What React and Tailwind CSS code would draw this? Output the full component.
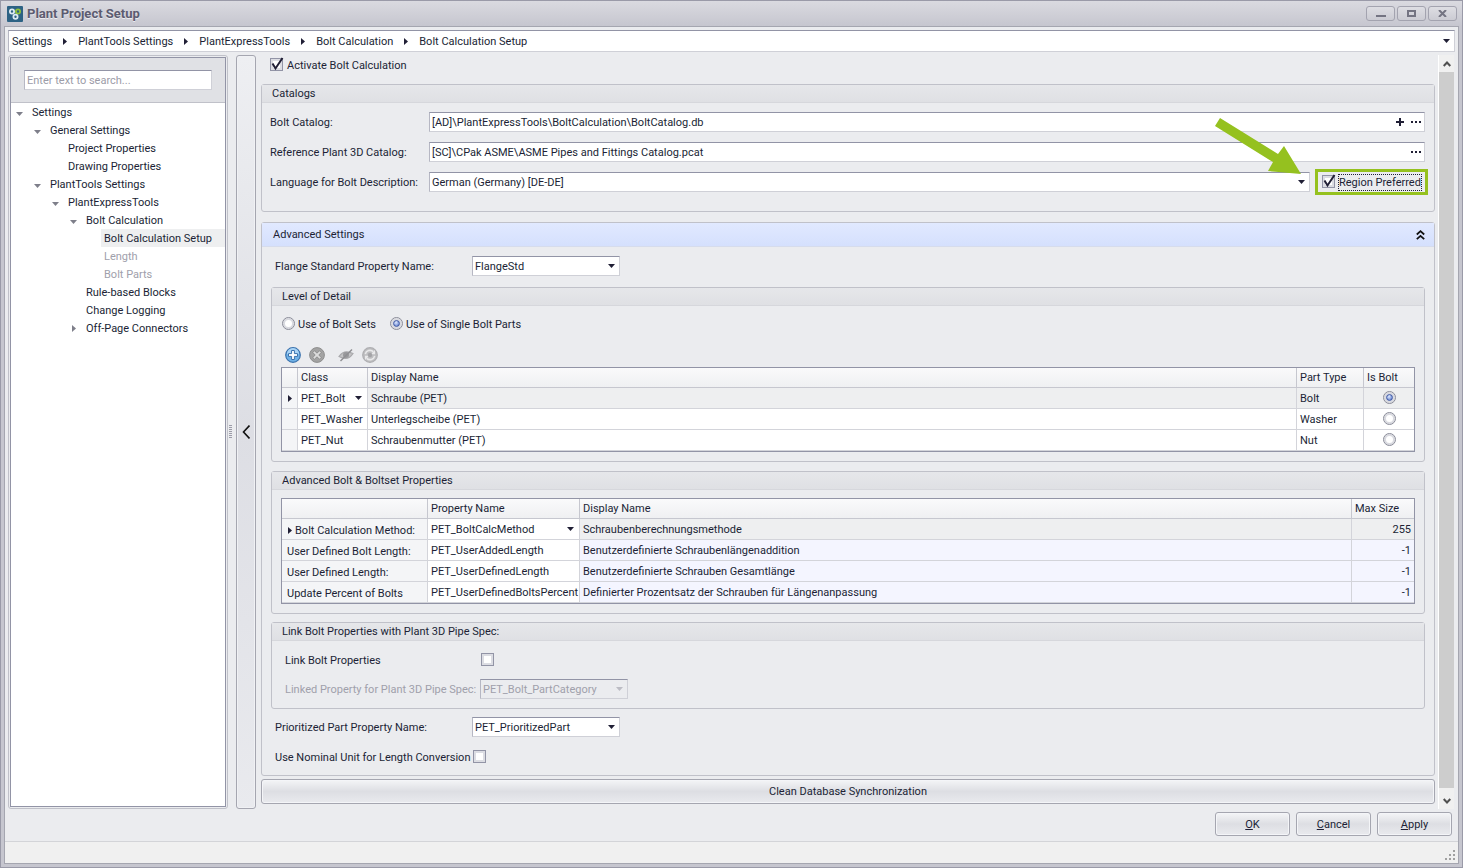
import React, { useState } from 'react';

const crumbs = ['Settings', 'PlantTools Settings', 'PlantExpressTools', 'Bolt Calculation', 'Bolt Calculation Setup'];

const treeItems = [
  { label: 'Settings', indent: 'pl-1', state: 'open' },
  { label: 'General Settings', indent: 'pl-[22px]', state: 'open' },
  { label: 'Project Properties', indent: 'pl-10' },
  { label: 'Drawing Properties', indent: 'pl-10' },
  { label: 'PlantTools Settings', indent: 'pl-[22px]', state: 'open' },
  { label: 'PlantExpressTools', indent: 'pl-10', state: 'open' },
  { label: 'Bolt Calculation', indent: 'pl-[58px]', state: 'open' },
  { label: 'Bolt Calculation Setup', indent: 'pl-[76px]', active: true },
  { label: 'Length', indent: 'pl-[76px]', disabled: true },
  { label: 'Bolt Parts', indent: 'pl-[76px]', disabled: true },
  { label: 'Rule-based Blocks', indent: 'pl-[58px]' },
  { label: 'Change Logging', indent: 'pl-[58px]' },
  { label: 'Off-Page Connectors', indent: 'pl-[58px]', state: 'closed' },
];

const parts = [
  { id: 'PET_Bolt', display: 'Schraube (PET)', type: 'Bolt' },
  { id: 'PET_Washer', display: 'Unterlegscheibe (PET)', type: 'Washer' },
  { id: 'PET_Nut', display: 'Schraubenmutter (PET)', type: 'Nut' },
];

const boltProps = [
  { label: 'Bolt Calculation Method:', name: 'PET_BoltCalcMethod', display: 'Schraubenberechnungsmethode', size: '255' },
  { label: 'User Defined Bolt Length:', name: 'PET_UserAddedLength', display: 'Benutzerdefinierte Schraubenlängenaddition', size: '-1' },
  { label: 'User Defined Length:', name: 'PET_UserDefinedLength', display: 'Benutzerdefinierte Schrauben Gesamtlänge', size: '-1' },
  { label: 'Update Percent of Bolts', name: 'PET_UserDefinedBoltsPercent', display: 'Definierter Prozentsatz der Schrauben für Längenanpassung', size: '-1' },
];

const ArrowDown = ({ className = '' }) => (
  <svg viewBox="0 0 7 4" className={`w-[7px] h-1 fill-current shrink-0 ${className}`}>
    <path d="M0 0H7L3.5 4Z" />
  </svg>
);

const ArrowRight = ({ className = '' }) => (
  <svg viewBox="0 0 4 7" className={`w-1 h-[7px] fill-current shrink-0 ${className}`}>
    <path d="M0 0V7L4 3.5Z" />
  </svg>
);

const Checkbox = ({ id, checked, onChange }) => (
  <span className="relative w-[13px] h-[13px] mb-px shrink-0">
    <input
      id={id}
      type="checkbox"
      checked={checked}
      onChange={onChange}
      className="block appearance-none w-[13px] h-[13px] border border-[#9294a6] bg-white shadow-[inset_0_0_0_2px_#dcdde3]"
    />
    {checked && (
      <svg viewBox="0 0 14 14" className="absolute left-0 bottom-0 w-[14px] h-[14px] pointer-events-none">
        <path d="M2.5 6.5L5.5 11.5L12.5 1" fill="none" stroke="#201f35" strokeWidth="2" />
      </svg>
    )}
  </span>
);

const Radio = ({ id, name, checked, onChange, label }) => (
  <span className="relative w-[13px] h-[13px] mb-px shrink-0">
    <input
      id={id}
      name={name}
      type="radio"
      aria-label={label}
      checked={checked}
      onChange={onChange}
      className="block appearance-none w-[13px] h-[13px] rounded-full border border-[#898b98] bg-white shadow-[inset_0_0_0_2px_#d9dae0]"
    />
    {checked && (
      <span className="absolute left-[3px] top-[3px] w-[7px] h-[7px] rounded-full border border-[#3a539d] bg-radial-[at_40%_30%] from-[#dfe9ff] to-[#4a6cc4] pointer-events-none" />
    )}
  </span>
);

const Select = ({ id, value, label, className = '', disabled }) => (
  <span className={`relative flex items-center h-5 ${className}`}>
    <select
      id={id}
      aria-label={label}
      defaultValue={value}
      disabled={disabled}
      className={`appearance-none w-full h-5 pl-[2px] pr-4 border border-[#cfd0d7] border-t-[#9294a6] border-l-[#b6b7c3] ${
        disabled ? 'bg-[#ebecef] text-[#a0a0ab] opacity-100 border-[#b6b7c3]' : 'bg-white'
      }`}
    >
      <option>{value}</option>
    </select>
    <ArrowDown className={`absolute right-[5px] pointer-events-none ${disabled ? 'text-[#bcbcc4]' : ''}`} />
  </span>
);

// select that sits flush inside a grid cell
const CellSelect = ({ value, label }) => (
  <span className="relative flex items-center">
    <select aria-label={label} defaultValue={value} className="appearance-none w-full h-5 pl-[3px] bg-transparent">
      <option>{value}</option>
    </select>
    <ArrowDown className="absolute right-[5px] pointer-events-none" />
  </span>
);

const PathInput = ({ id, value, withAdd }) => (
  <div className="flex-1 h-5 flex items-center bg-white border border-[#cfd0d7] border-t-[#9294a6] border-l-[#b6b7c3]">
    <input id={id} type="text" defaultValue={value} className="flex-1 min-w-0 h-[18px] pl-[2px] outline-none" />
    {withAdd && (
      <button aria-label="Add catalog" className="w-4 h-4 flex items-center justify-center">
        <svg viewBox="0 0 8 8" className="w-2 h-2 fill-current"><path d="M3 0H5V3H8V5H5V8H3V5H0V3H3Z" /></svg>
      </button>
    )}
    <button aria-label="Browse" className="w-4 h-4 flex items-center justify-center">
      <svg viewBox="0 0 10 2" className="w-[10px] h-[2px] fill-current"><path d="M0 0H2V2H0ZM4 0H6V2H4ZM8 0H10V2H8Z" /></svg>
    </button>
  </div>
);

const Group = ({ title, className = '', children }) => (
  <section className={`border border-[#c0c1c9] rounded-[3px] ${className}`}>
    <h2 className="h-[18px] pl-[10px] flex items-center border-b border-[#d6d7dc] bg-linear-to-b from-[#e6e7ea] to-[#dfe0e4]">
      {title}
    </h2>
    {children}
  </section>
);

const Th = ({ className = '', children }) => (
  <th className={`h-5 pl-[3px] text-left font-normal bg-linear-to-b from-[#fafafb] to-[#eff0f2] border-b border-r border-[#c6c7cf] ${className}`}>
    {children}
  </th>
);

const Td = ({ className = '', children }) => (
  <td className={`h-[21px] border-b border-r border-[#d3d4da] ${className}`}>{children}</td>
);

const buttonStyle =
  'border border-[#a5a6b0] rounded-[3px] bg-linear-to-b from-[#f4f5f7] via-[#dddee3] to-[#e9eaee] shadow-[inset_0_0_0_1px_#f4f5f8]';

const TitleBar = () => (
  <header className="h-[25px] flex items-center justify-between pl-[6px] pr-[5px] bg-linear-to-b from-[#dadae0] to-[#c6c6cf]">
    <div className="flex items-center gap-1">
      <svg viewBox="0 0 16 16" className="w-4 h-4">
        <rect width="16" height="16" rx="1" fill="#2d6284" />
        <g fill="none" strokeWidth="1.8">
          <circle cx="5" cy="5.5" r="2.1" stroke="#dceaf2" />
          <circle cx="11" cy="5.5" r="2.1" stroke="#8fc13c" />
          <circle cx="8.5" cy="10.7" r="2.1" stroke="#dceaf2" />
        </g>
      </svg>
      <h1 className="text-[13px] font-bold text-[#5c5b70] [text-shadow:0_1px_0_#ececf1]">Plant Project Setup</h1>
    </div>
    <div className="flex gap-[2px] text-[#747482]">
      <button aria-label="Minimize" className="w-[29px] h-[15px] flex items-center justify-center border border-[#a3a3af] rounded-[3px] bg-linear-to-b from-[#dedee3] to-[#cbcbd3]">
        <svg viewBox="0 0 10 8" className="w-[10px] h-2 fill-current"><path d="M0 5H10V7H0Z" /></svg>
      </button>
      <button aria-label="Maximize" className="w-[29px] h-[15px] flex items-center justify-center border border-[#a3a3af] rounded-[3px] bg-linear-to-b from-[#dedee3] to-[#cbcbd3]">
        <svg viewBox="0 0 9 7" className="w-[9px] h-[7px]"><rect x="1" y="1" width="7" height="5" fill="none" stroke="currentColor" strokeWidth="2" /></svg>
      </button>
      <button aria-label="Close" className="w-[29px] h-[15px] flex items-center justify-center border border-[#a3a3af] rounded-[3px] bg-linear-to-b from-[#dedee3] to-[#cbcbd3]">
        <svg viewBox="0 0 9 7" className="w-[9px] h-[7px]"><path d="M1 0L8 7M8 0L1 7" stroke="currentColor" strokeWidth="2" /></svg>
      </button>
    </div>
  </header>
);

const Breadcrumbs = () => (
  <nav className="h-[22px] pl-[3px] pr-1 flex items-center justify-between bg-white border border-[#cfd0d7] border-t-[#9294a6] border-l-[#b6b7c3]">
    <div className="flex items-center">
      {crumbs.map((crumb, i) => (
        <React.Fragment key={crumb}>
          {i > 0 && <ArrowRight className="mx-[11px]" />}
          <a href="#">{crumb}</a>
        </React.Fragment>
      ))}
    </div>
    <button aria-label="Show history"><ArrowDown /></button>
  </nav>
);

const TreeItem = ({ item }) => (
  <li className={`h-[18px] flex items-center ${item.indent} ${item.disabled ? 'text-[#a0a0ab]' : ''}`}>
    <span className="w-[14px] shrink-0 flex pl-px text-[#7e7f8a]">
      {item.state === 'open' && <ArrowDown className="mt-[3px]" />}
      {item.state === 'closed' && <ArrowRight className="ml-[2px] mt-px" />}
    </span>
    <a href="#" className={`flex-1 h-[18px] pl-[3px] flex items-center ${item.active ? 'bg-[#eeeff0]' : ''}`}>
      {item.label}
    </a>
  </li>
);

const Sidebar = () => (
  <aside className="w-[220px] shrink-0 flex border border-[#c0c1c9] rounded-[3px] p-px">
    <div className="flex-1 flex flex-col border border-[#9294a6] bg-white">
      <div className="h-[45px] px-[13px] pt-3 border-b border-[#c0c1c9] bg-[#e0e1e5]">
        <input
          type="text"
          aria-label="Search settings"
          placeholder="Enter text to search..."
          className="block w-full h-5 px-[2px] bg-white border border-[#cfd0d7] border-t-[#9294a6] border-l-[#b6b7c3] placeholder:text-[#9c9ca8]"
        />
      </div>
      <ul>
        {treeItems.map((item) => (
          <TreeItem key={item.label} item={item} />
        ))}
      </ul>
    </div>
  </aside>
);

const Splitter = () => (
  <div className="flex items-stretch ml-px shrink-0">
    <svg viewBox="0 0 3 14" className="w-[3px] h-[14px] self-center mr-1">
      <path d="M0 .5H3M0 2.5H3M0 4.5H3M0 6.5H3M0 8.5H3M0 10.5H3M0 12.5H3" stroke="#9c9ca8" />
    </svg>
    <button
      aria-label="Collapse navigation"
      className="w-5 flex items-center justify-center border border-[#a5a6b0] rounded-[3px] bg-linear-to-b from-[#eeeff2] via-[#dddee4] to-[#e9eaee] shadow-[inset_0_0_0_1px_#f0f1f4]"
    >
      <svg viewBox="0 0 8 14" className="w-2 h-[14px]">
        <path d="M7.5 .5L1.5 7L7.5 13.5" fill="none" stroke="#111" strokeWidth="1.6" />
      </svg>
    </button>
  </div>
);

const Catalogs = () => {
  const [region, setRegion] = useState(true);

  return (
    <Group title="Catalogs" className="mt-[9px]">
      <div className="flex flex-col gap-[10px] pl-2 pr-[9px] pt-[9px] pb-[19px]">
        <div className="flex items-center">
          <label htmlFor="bolt-catalog" className="w-[159px]">Bolt Catalog:</label>
          <PathInput id="bolt-catalog" value="[AD]\PlantExpressTools\BoltCalculation\BoltCatalog.db" withAdd />
        </div>
        <div className="flex items-center">
          <label htmlFor="ref-catalog" className="w-[159px]">Reference Plant 3D Catalog:</label>
          <PathInput id="ref-catalog" value="[SC]\CPak ASME\ASME Pipes and Fittings Catalog.pcat" />
        </div>
        <div className="flex items-center h-5 -mr-[3px]">
          <label htmlFor="language" className="w-[159px]">Language for Bolt Description:</label>
          <Select id="language" value="German (Germany) [DE-DE]" className="flex-1" />
          <div className="relative ml-[5px] h-[26px] w-[113px] pl-1 flex items-center gap-[3px] border-3 border-[#95c11f]">
            <Checkbox id="region" checked={region} onChange={() => setRegion(!region)} />
            <label htmlFor="region" className="h-[17px] flex items-center whitespace-nowrap border border-dotted border-[#201f35]">
              Region Preferred
            </label>
            <svg viewBox="0 0 96 64" className="absolute -left-[108px] -top-[58px] w-24 h-16 pointer-events-none">
              <path d="M10 4L68 40L74 32L91 60L58 57L63 48L5 12Z" fill="#95c11f" />
            </svg>
          </div>
        </div>
      </div>
    </Group>
  );
};

const Toolbar = () => (
  <div className="flex items-center mt-[13px] pl-1">
    <button aria-label="Add">
      <svg viewBox="0 0 16 16" className="w-4 h-4">
        <circle cx="8" cy="8" r="7.3" fill="#6fb1e6" stroke="#3b72ad" strokeWidth="1.2" />
        <path d="M2 7A6 6 0 0 1 14 7Q8 9 2 7Z" fill="#a9d3f5" />
        <path d="M6.6 3.5H9.4V6.6H12.5V9.4H9.4V12.5H6.6V9.4H3.5V6.6H6.6Z" fill="#fff" stroke="#3b72ad" strokeWidth="1" />
      </svg>
    </button>
    <button aria-label="Delete" className="ml-2">
      <svg viewBox="0 0 16 16" className="w-4 h-4">
        <circle cx="8" cy="8" r="7.4" fill="#a3a3a3" stroke="#8e8e8e" />
        <path d="M5.5 3.8L8 6.2L10.5 3.8L12.2 5.5L9.8 8L12.2 10.5L10.5 12.2L8 9.8L5.5 12.2L3.8 10.5L6.2 8L3.8 5.5Z" fill="#dcdcdc" stroke="#858585" strokeWidth=".8" />
      </svg>
    </button>
    <button aria-label="Hide" className="ml-[13px]">
      <svg viewBox="0 0 16 16" className="w-4 h-4">
        <path d="M1 9.5Q6 2 15 6.5Q10 14.5 1 9.5Z" fill="#c4c4c6" stroke="#a9a9ac" strokeWidth="1.2" />
        <circle cx="8" cy="8" r="3" fill="#98989b" />
        <path d="M2.5 14L14 2.5" stroke="#8f8f92" strokeWidth="1.4" />
      </svg>
    </button>
    <button aria-label="Refresh" className="ml-2">
      <svg viewBox="0 0 16 16" className="w-4 h-4">
        <circle cx="8" cy="8" r="7.3" fill="#bebec0" stroke="#aeaeb1" strokeWidth="1.2" />
        <path d="M3.3 7.2A4.8 4.8 0 0 1 11.3 4.7M12.7 8.8A4.8 4.8 0 0 1 4.7 11.3" fill="none" stroke="#e9e9ea" strokeWidth="1.6" />
        <path d="M13 3V7.2H8.8ZM3 13V8.8H7.2Z" fill="#e9e9ea" />
        <circle cx="8" cy="8" r="2.2" fill="#a4a4a7" />
      </svg>
    </button>
  </div>
);

const LevelOfDetail = () => {
  const [mode, setMode] = useState('single');
  const [isBolt, setIsBolt] = useState('PET_Bolt');

  return (
    <Group title="Level of Detail" className="mt-[11px]">
      <div className="px-[9px] pt-2 pb-[9px]">
        <div className="h-5 flex items-center gap-[3px] pl-px">
          <Radio id="mode-sets" name="mode" checked={mode === 'sets'} onChange={() => setMode('sets')} />
          <label htmlFor="mode-sets" className="mr-[11px]">Use of Bolt Sets</label>
          <Radio id="mode-single" name="mode" checked={mode === 'single'} onChange={() => setMode('single')} />
          <label htmlFor="mode-single">Use of Single Bolt Parts</label>
        </div>
        <Toolbar />
        <div className="mt-1 border border-[#9294a6] bg-white">
          <table className="w-full table-fixed border-separate border-spacing-0">
            <colgroup>
              <col className="w-4" />
              <col className="w-[70px]" />
              <col />
              <col className="w-[67px]" />
              <col className="w-[50px]" />
            </colgroup>
            <thead>
              <tr>
                <Th />
                <Th>Class</Th>
                <Th>Display Name</Th>
                <Th>Part Type</Th>
                <Th className="border-r-0">Is Bolt</Th>
              </tr>
            </thead>
            <tbody>
              {parts.map((part, i) => (
                <tr key={part.id} className={i === 0 ? 'bg-[#eeeff0]' : ''}>
                  <Td className="bg-[#f4f5f7]">{i === 0 && <ArrowRight className="ml-[6px]" />}</Td>
                  <Td className="bg-white">
                    {i === 0 ? <CellSelect value={part.id} label="Class" /> : <span className="pl-[3px]">{part.id}</span>}
                  </Td>
                  <Td className="pl-[3px]">{part.display}</Td>
                  <Td className="pl-[3px]">{part.type}</Td>
                  <Td className="border-r-0">
                    <span className="flex justify-center">
                      <Radio name="is-bolt" label={`${part.type} is bolt`} checked={isBolt === part.id} onChange={() => setIsBolt(part.id)} />
                    </span>
                  </Td>
                </tr>
              ))}
            </tbody>
          </table>
        </div>
      </div>
    </Group>
  );
};

const BoltProperties = () => (
  <Group title="Advanced Bolt & Boltset Properties" className="mt-[9px]">
    <div className="px-[9px] pt-2 pb-[9px]">
      <div className="border border-[#9294a6] bg-white">
        <table className="w-full table-fixed border-separate border-spacing-0">
          <colgroup>
            <col className="w-[146px]" />
            <col className="w-[152px]" />
            <col />
            <col className="w-[62px]" />
          </colgroup>
          <thead>
            <tr>
              <Th />
              <Th>Property Name</Th>
              <Th>Display Name</Th>
              <Th className="border-r-0">Max Size</Th>
            </tr>
          </thead>
          <tbody>
            {boltProps.map((prop, i) => (
              <tr key={prop.name} className={i === 0 ? 'bg-[#eeeff0]' : 'bg-[#f4f5ff]'}>
                <Td className="bg-[#f4f5f7]">
                  <span className="flex items-center gap-[3px] pl-[5px] pt-[2px] whitespace-nowrap">
                    {i === 0 && <ArrowRight className="ml-px" />}
                    {prop.label}
                  </span>
                </Td>
                <Td className="bg-white whitespace-nowrap">
                  {i === 0 ? <CellSelect value={prop.name} label="Property name" /> : <span className="pl-[3px]">{prop.name}</span>}
                </Td>
                <Td className="pl-[3px]">{prop.display}</Td>
                <Td className="pr-[3px] text-right border-r-0">{prop.size}</Td>
              </tr>
            ))}
          </tbody>
        </table>
      </div>
    </div>
  </Group>
);

const LinkProperties = () => {
  const [linked, setLinked] = useState(false);

  return (
    <Group title="Link Bolt Properties with Plant 3D Pipe Spec:" className="mt-2">
      <div className="flex flex-col gap-[9px] px-[13px] py-[9px]">
        <div className="h-5 flex items-center">
          <label htmlFor="link-props" className="w-[196px]">Link Bolt Properties</label>
          <Checkbox id="link-props" checked={linked} onChange={() => setLinked(!linked)} />
        </div>
        <div className="h-5 flex items-center">
          <label htmlFor="linked-prop" className="w-[195px] whitespace-nowrap text-[#a0a0ab]">Linked Property for Plant 3D Pipe Spec:</label>
          <Select id="linked-prop" value="PET_Bolt_PartCategory" className="w-[148px]" disabled />
        </div>
      </div>
    </Group>
  );
};

const AdvancedSettings = () => {
  const [nominal, setNominal] = useState(false);

  return (
    <section className="mt-[10px] border border-[#c0c1c9] rounded-[3px]">
      <div className="h-6 pl-[11px] pr-[9px] flex items-center justify-between border-b border-[#d6dcec] bg-linear-to-b from-[#e1e9ff] to-[#d5e0fd]">
        <h2>Advanced Settings</h2>
        <button aria-label="Collapse advanced settings">
          <svg viewBox="0 0 9 10" className="w-[9px] h-[10px]">
            <path d="M.8 4.5L4.5 1.2L8.2 4.5M.8 9.2L4.5 5.9L8.2 9.2" fill="none" stroke="#111" strokeWidth="1.8" />
          </svg>
        </button>
      </div>
      <div className="px-[9px] pt-[9px] pb-2">
        <div className="h-5 flex items-center pl-1">
          <label htmlFor="flange" className="w-[197px]">Flange Standard Property Name:</label>
          <Select id="flange" value="FlangeStd" className="w-[148px]" />
        </div>
        <LevelOfDetail />
        <BoltProperties />
        <LinkProperties />
        <div className="h-5 flex items-center mt-2 pl-1">
          <label htmlFor="prioritized" className="w-[197px]">Prioritized Part Property Name:</label>
          <Select id="prioritized" value="PET_PrioritizedPart" className="w-[148px]" />
        </div>
        <div className="h-5 flex items-center mt-[10px] pl-1">
          <label htmlFor="nominal" className="w-[198px] whitespace-nowrap">Use Nominal Unit for Length Conversion</label>
          <Checkbox id="nominal" checked={nominal} onChange={() => setNominal(!nominal)} />
        </div>
      </div>
    </section>
  );
};

const ScrollBar = () => (
  <div className="w-4 ml-[3px] mr-px shrink-0 flex flex-col bg-[#f0f0f0] border-l border-white text-[#505050]">
    <button aria-label="Scroll up" className="h-[17px] flex items-center justify-center">
      <svg viewBox="0 0 8 6" className="w-2 h-[6px]"><path d="M.7 5L4 1.5L7.3 5" fill="none" stroke="currentColor" strokeWidth="2" /></svg>
    </button>
    <div className="flex-1 bg-[#cdcdcd]" />
    <button aria-label="Scroll down" className="h-[21px] pt-1 flex items-center justify-center">
      <svg viewBox="0 0 8 6" className="w-2 h-[6px]"><path d="M.7 1L4 4.5L7.3 1" fill="none" stroke="currentColor" strokeWidth="2" /></svg>
    </button>
  </div>
);

const App = () => {
  const [activated, setActivated] = useState(true);

  return (
    <div className="min-h-screen flex flex-col border border-[#9a9aa8] bg-[#c6c6cf] font-['Roboto','DejaVu_Sans',sans-serif] text-[11px] leading-[15px] text-[#201f35]">
      <TitleBar />
      <div className="flex-1 flex flex-col mx-[3px] mb-[3px] border border-[#a5a6b0] bg-[#ebecef]">
        <div className="flex-1 flex flex-col px-[3px] pt-[3px]">
          <Breadcrumbs />
          <div className="flex-1 flex mt-[3px]">
            <Sidebar />
            <Splitter />
            <main className="flex-1 min-w-0 ml-[5px]">
              <div className="h-5 pl-[9px] flex items-center gap-1">
                <Checkbox id="activate" checked={activated} onChange={() => setActivated(!activated)} />
                <label htmlFor="activate">Activate Bolt Calculation</label>
              </div>
              <Catalogs />
              <AdvancedSettings />
              <button className={`w-full h-[25px] mt-[3px] ${buttonStyle}`}>Clean Database Synchronization</button>
            </main>
            <ScrollBar />
          </div>
          <div className="flex justify-end gap-[6px] mt-[3px] mb-[5px] pr-[3px]">
            <button className={`w-[75px] h-6 ${buttonStyle}`}><u>O</u>K</button>
            <button className={`w-[75px] h-6 ${buttonStyle}`}><u>C</u>ancel</button>
            <button className={`w-[75px] h-6 ${buttonStyle}`}><u>A</u>pply</button>
          </div>
        </div>
        <footer className="h-[22px] flex justify-end items-end pr-[3px] pb-[3px] border-t border-[#d3d4d8] bg-[#f0f0f0]">
          <svg viewBox="0 0 10 10" className="w-[10px] h-[10px]">
            <path d="M8 0H10V2H8ZM4 4H6V6H4ZM8 4H10V6H8ZM0 8H2V10H0ZM4 8H6V10H4ZM8 8H10V10H8Z" fill="#a0a0a0" />
          </svg>
        </footer>
      </div>
    </div>
  );
};

export default App;
